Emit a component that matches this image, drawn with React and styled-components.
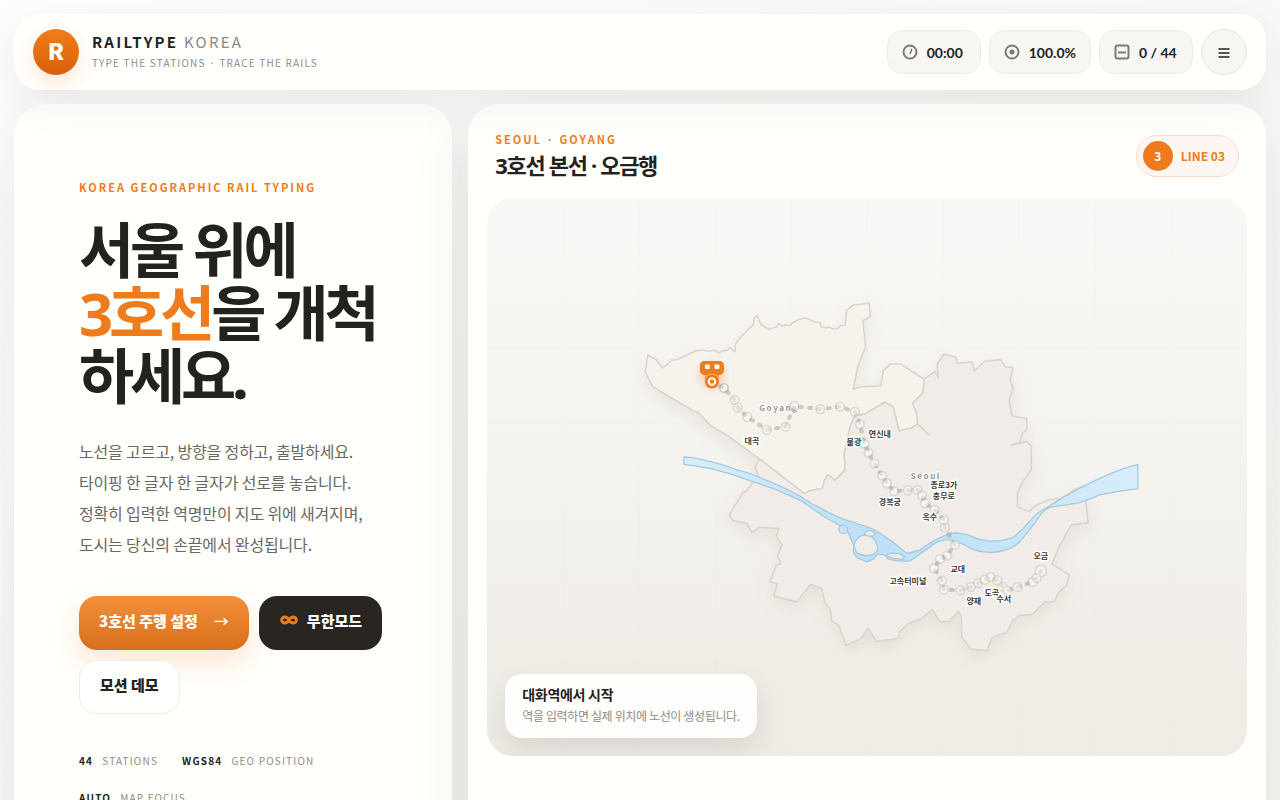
import React from "react"
import styled, { createGlobalStyle } from "styled-components"

const stats = [
  { id: "time", label: "Time", value: "00:00" },
  { id: "accuracy", label: "Accuracy", value: "100.0%" },
  { id: "progress", label: "Progress", value: "0 / 44" },
]

const facts = [
  { value: "44", label: "STATIONS" },
  { value: "WGS84", label: "GEO POSITION" },
  { value: "AUTO", label: "MAP FOCUS" },
]

const introLines = [
  "노선을 고르고, 방향을 정하고, 출발하세요.",
  "타이핑 한 글자 한 글자가 선로를 놓습니다.",
  "정확히 입력한 역명만이 지도 위에 새겨지며,",
  "도시는 당신의 손끝에서 완성됩니다.",
]

const stations = [
  [712, 381], [724, 388], [734.7, 400], [737.7, 407.7], [747.3, 417],
  [767, 430], [785.7, 426.7], [794.3, 406], [820.3, 409.3], [840, 406.7],
  [855, 412], [860, 424.3], [864.7, 444], [868.7, 453], [874.7, 463.7],
  [882, 475.7], [887, 483.3], [894.3, 491.3], [908, 490.3], [917.7, 490],
  [922.3, 495.7], [925.3, 503.3], [934.7, 510], [944, 520], [945, 527.7],
  [955, 544.7], [947.3, 555.7], [940, 559.3], [934.3, 568.3], [942, 580.7],
  [944, 589.7], [960.7, 590.3], [971, 587], [978.3, 583.3], [985, 579.7],
  [990.7, 577.3], [997.3, 580.3], [1002.7, 586.7], [1007.7, 590.7],
  [1017.7, 587], [1032.7, 582], [1036.7, 578.3], [1041, 571],
]

const stationLabels = [
  { name: "대곡", x: 752, y: 444 },
  { name: "연신내", x: 880, y: 437 },
  { name: "불광", x: 854, y: 445 },
  { name: "경복궁", x: 890, y: 505 },
  { name: "종로3가", x: 944, y: 488 },
  { name: "충무로", x: 944, y: 499 },
  { name: "옥수", x: 930, y: 520 },
  { name: "고속터미널", x: 908, y: 584 },
  { name: "교대", x: 958, y: 572 },
  { name: "양재", x: 974, y: 604 },
  { name: "도곡", x: 992, y: 596 },
  { name: "수서", x: 1004, y: 602 },
  { name: "오금", x: 1041, y: 559 },
]

const sharedBorder =
  "804.7,494 809,491 822.7,488.3 824,481.7 828,474.7 835,480.3 845.3,470 844.3,453 846,447 850,427 855,416 865,414 885,402.3 893.3,406.7 899,431 911,428.3 917.7,424 916.7,413.3 912.7,403.3 923.3,392.7 924,379.3"

const goyang =
  "648,355 645.3,371.7 652.7,386.7 692,410 699,412.5 710.7,426 726.7,435 759.5,459 " +
  sharedBorder +
  " 900.7,364 890.7,364 883.3,370.7 881,386 861,386.7 853.3,389.3 857.7,367.3 865.7,346.7 863,320.7 870.3,316.7 869.3,302.7 861.7,304.3 853.3,305 846.7,310.7 845.3,325.3 841,325.5 838.3,328.3 833.3,329.3 829,327 826,327.8 821.5,327 820,322.7 815,322 805,317.7 799,319.5 792.7,322.7 790,325.5 785,324.5 782,326.5 778.5,323.5 777,327 773,328 769,329.5 765,327 761,324.5 758.5,318.5 756.5,315.5 754,318.5 753.5,325 748,329.5 741,337 735.5,344 735,351.7 729.5,347.5 727.5,350.5 723,350.7 719,353 714,350 709,351.5 702,350 696,351 690,353.5 684,356.5 677,359.5 671,360.5 667,365 662.7,368 656,359.5"

const seoul =
  sharedBorder +
  " 935,371.7 938.3,378.3 937.3,364 944,354 955.7,356.7 957.3,363.3 972.3,362 974.3,371 985,361.3 1000.7,359.7 1005.3,366.7 1013.3,367.7 1010.3,379.3 1013.3,389.3 1009.3,400 1012,416 1026.7,418.3 1027.3,428.3 1021.7,435 1020.3,442.3 1011.3,445 1026.7,441.7 1031.7,446 1031.3,470 1021.7,483.3 1017.5,493.3 1017.7,506.7 1029.3,511.7 1036.7,505 1050,499.3 1065,499 1073.3,490 1083.3,486 1086,501.7 1088.3,522.7 1071.7,525 1060,545 1052,564.3 1069.3,574.7 1067.3,584.3 1058.3,593.3 1054.3,602 1045,602 1032,614.7 1020,615.3 1012.7,621.3 1007,632.7 992,637.7 987,651 971,649 962,637.7 961.3,616.7 958.7,611.7 949.3,621.3 940,622 932.7,609.7 920.7,619.3 908.7,623.3 899.3,632.3 899,638.3 876.7,641.7 868.3,628.3 860.7,639 846.3,645.3 839,625.7 831.7,621 830.7,610.7 824.7,602 822,589 810.7,584.3 796.7,602 773.7,596 777.3,584.3 770,581.7 776.7,565 781,564 777.7,555.7 782,545 776.3,535.7 779.3,528.7 759.3,527.3 752.3,533 746.7,523.3 733.3,521 729.3,515 742.7,493.3 746.7,491 753.3,481.7 758,474.3 755.3,466.7 759.5,459"

const riverPath =
  "M684 457Q696 458 703 460Q722 464 737 470Q756 475 763 479Q786 488 803 498Q811 504 822 509Q832 515 843 519Q858 524 870 528Q879 532 887 538Q897 545 907 553.5Q914 552 920 550Q934 540 945 535.7Q951 531.5 960 533.5Q968 534.5 975 537.7Q983 541 993 541.3Q1003 541 1013 537.7Q1023 530 1032 519Q1038 512 1047 507.7Q1064 496 1083 486.7Q1098 479 1113 472.7Q1125 468 1138 464.5V488.7Q1118 491 1100 495Q1091 499 1080 502.7Q1068 505 1053 506.7Q1047 508 1042 513Q1031 529 1023 538Q1018 545 1012 547.7Q1002 552 992 552.7Q982 553 972 549.3Q964 544 957 541.7Q951 539.5 945 540Q940 541 935 543.3Q928 549 923 551.7Q916 558 910 561Q898 562 888 559L885 555L877.3 554.3L874 559L867 562L857 557.7L853.3 551.7L854 546Q850 536 846.7 530Q838 524 827 518.3Q815 511 803 501.7Q790 496 777 490Q763 485 750 480.7Q732 474 713 469.3Q698 466 684 464.5Z"

const gridX = [563, 639, 715, 791, 867, 943, 1019, 1095, 1171]
const gridY = [273, 348, 423, 498, 573, 648, 723]

const GlobalStyle = createGlobalStyle`
  * {
    box-sizing: border-box;
  }
  html {
    overflow: hidden;
  }
  body {
    margin: 0;
    color: #24221e;
    background: linear-gradient(150deg, #fdfdfd 0%, #f7f7f6 60%, #f6f5f3 100%);
    font-family: "Noto Sans CJK KR", sans-serif;
  }
  button {
    font-family: inherit;
    cursor: pointer;
  }
`

const Page = styled.div`
  padding: 14px;
`

const Header = styled.header`
  position: relative;
  z-index: 2;
  display: flex;
  align-items: center;
  justify-content: space-between;
  height: 76px;
  padding: 0 19px;
  border-radius: 26px;
  background: #fffffc;
  box-shadow: 0 12px 40px rgba(40, 40, 50, 0.08);
`

const Brand = styled.div`
  display: flex;
  align-items: center;
  gap: 13px;
`

const Logo = styled.span`
  display: grid;
  place-items: center;
  width: 46px;
  height: 46px;
  padding-bottom: 4px;
  border-radius: 50%;
  color: #fff;
  font-size: 23px;
  font-weight: 900;
  line-height: 24px;
  background: linear-gradient(#f07d1c, #d7600a);
  box-shadow: 0 8px 20px rgba(239, 124, 28, 0.18);
`

const BrandName = styled.div`
  padding-top: 2px;
  font-size: 15px;
  font-weight: 700;
  line-height: 20px;
  letter-spacing: 0.15em;

  span {
    color: #8a8883;
    font-weight: 400;
  }
`

const BrandTagline = styled.div`
  color: #8f8b84;
  font-size: 10px;
  line-height: 22px;
  letter-spacing: 0.12em;
`

const Stats = styled.div`
  display: flex;
  align-items: center;
  gap: 8px;
`

const Stat = styled.div`
  display: flex;
  align-items: center;
  gap: 9px;
  min-width: 94px;
  height: 44px;
  padding: 0 14px;
  border: 1px solid #eeebe7;
  border-radius: 16px;
  background: #f8f6f3;
  font-family: Lato, "Noto Sans CJK KR", sans-serif;
  font-size: 14px;
  font-weight: 700;
  white-space: nowrap;

  svg {
    width: 16px;
    height: 16px;
    color: #7d7b77;
  }
`

const MenuButton = styled.button`
  display: grid;
  place-items: center;
  width: 46px;
  height: 46px;
  padding: 0;
  border: 1px solid #e6e5e1;
  border-radius: 50%;
  background: #f7f6f3;
  color: #24221e;
`

const Main = styled.main`
  display: grid;
  grid-template-columns: minmax(0, 39fr) minmax(0, 71fr);
  gap: 16px;
  margin-top: 14px;
`

const Panel = styled.section`
  min-width: 0;
  border-radius: 32px;
  background: #fffffc;
  box-shadow: 0 20px 60px rgba(50, 45, 40, 0.1);
`

const Intro = styled(Panel)`
  padding: 71px 65px;
`

const MapPanel = styled(Panel)`
  padding: 23px 19px;
`

const Eyebrow = styled.p`
  margin: 0;
  color: #ef7c1c;
  font-size: 11px;
  font-weight: 700;
  line-height: 24px;
  letter-spacing: 2px;
`

const Title = styled.h1`
  margin: 20px 0 0;
  font-family: "Noto Sans", "Noto Sans CJK KR", sans-serif;
  font-size: 60px;
  font-weight: 700;
  line-height: 63px;
  letter-spacing: -0.07em;
  word-break: break-all;

  em {
    color: #ef7c1c;
    font-style: normal;
  }
`

const Lead = styled.p`
  margin: 28px 0 0;
  color: #6a6761;
  font-size: 16px;
  line-height: 31px;
  letter-spacing: -0.01em;
  white-space: nowrap;
`

const Actions = styled.div`
  display: flex;
  flex-wrap: wrap;
  gap: 10px;
  margin-top: 36px;
`

const ActionButton = styled.button`
  display: inline-flex;
  align-items: center;
  gap: ${props => (props.$tone === "primary" ? "16px" : "8px")};
  height: 54px;
  padding: 0 20px 6px;
  border: ${props => (props.$tone === "plain" ? "1px solid #ececea" : "0")};
  border-radius: 18px;
  color: ${props => (props.$tone === "plain" ? "#24221e" : "#fff")};
  background: ${props =>
    props.$tone === "primary"
      ? "linear-gradient(#f48f3b, #d66f1a)"
      : props.$tone === "dark"
      ? "#292621"
      : "#fffffd"};
  box-shadow: ${props =>
    props.$tone === "primary" ? "0 12px 28px rgba(239, 124, 28, 0.2)" : "none"};
  font-size: 15px;
  font-weight: 900;

  span {
    font-weight: 500;
  }
  svg {
    color: #ef7c1c;
  }
`

const Facts = styled.ul`
  display: flex;
  flex-wrap: wrap;
  gap: 13px 24px;
  margin: 35px 0 0;
  padding: 0;
  list-style: none;
  color: #8f8b84;
  font-size: 10px;
  line-height: 24px;
  letter-spacing: 0.12em;

  b {
    margin-right: 9px;
    color: #24221e;
  }
`

const MapHeader = styled.div`
  display: flex;
  align-items: flex-end;
  justify-content: space-between;
  padding: 0 8px;

  h2 {
    margin: 0;
    padding-top: 2px;
    font-family: "Noto Sans", "Noto Sans CJK KR", sans-serif;
    font-size: 22px;
    line-height: 24px;
    letter-spacing: -0.06em;
  }
`

const LineBadge = styled.div`
  display: flex;
  align-items: center;
  gap: 8px;
  height: 42px;
  padding: 0 13px 0 6px;
  border: 1px solid #fbdcc8;
  border-radius: 21px;
  background: #fdf7f4;
  color: #ef7c1c;
  font-size: 12px;
  font-weight: 700;
  line-height: 16px;

  span {
    display: grid;
    place-items: center;
    width: 30px;
    height: 30px;
    border-radius: 50%;
    color: #fff;
    background: #ef7c1c;
  }
`

const MapCanvas = styled.div`
  position: relative;
  margin-top: 21px;
  border-radius: 26px;
  overflow: hidden;
  background: linear-gradient(#f9f8f6, #f3f1ec 60%, #efebe5);

  > svg {
    display: block;
    width: 100%;
    height: auto;
  }
`

const MapNote = styled.div`
  position: absolute;
  left: 18px;
  bottom: 18px;
  padding: 10px 17px 12px;
  border-radius: 17px;
  background: #fefefd;
  box-shadow: 0 12px 30px rgba(60, 50, 40, 0.12);
  line-height: 21px;

  strong {
    display: block;
    font-size: 14px;
    letter-spacing: -0.02em;
  }
  span {
    display: block;
    color: #918c85;
    font-size: 12px;
    letter-spacing: -0.03em;
  }
`

const StationName = styled.text`
  fill: #3b3733;
  stroke: #fff;
  stroke-width: 3px;
  stroke-linejoin: round;
  paint-order: stroke;
  font-size: 8px;
  font-weight: 700;
  text-anchor: middle;
`

const CityName = styled.text`
  fill: #99958f;
  stroke: #fff;
  stroke-width: 2px;
  paint-order: stroke;
  font-size: 8px;
  font-weight: 700;
  letter-spacing: 0.2em;
  text-anchor: middle;
`

const StatIcon = ({ id }) => (
  <svg viewBox="0 0 16 16" fill="none" stroke="currentColor" strokeWidth="2" aria-hidden="true">
    {id === "progress" ? (
      <>
        <rect x="1.5" y="1.5" width="13" height="13" rx="2" />
        <path d="M4 8.5h8" />
      </>
    ) : (
      <circle cx="8" cy="8" r="6.5" />
    )}
    {id === "time" && <path d="M8.3 9.2 9.6 5.4" strokeLinecap="round" strokeWidth="1.6" />}
    {id === "accuracy" && <circle cx="8" cy="8" r="2.5" fill="currentColor" stroke="none" />}
  </svg>
)

const Train = () => (
  <g>
    <circle cx="712" cy="376" r="19" fill="url(#trainGlow)" />
    <path d="M705 374h14v5h-14z" fill="#ef7c1c" opacity=".7" />
    <rect x="700" y="361" width="24" height="14" rx="4.5" fill="#ef7c1c" />
    <rect x="705" y="364.5" width="5" height="4.5" rx="1.5" fill="#fff" />
    <rect x="714.5" y="364.5" width="5" height="4.5" rx="1.5" fill="#fff" />
    <circle cx="712" cy="381.5" r="8" fill="#f7c9a3" opacity=".5" />
    <circle cx="712" cy="381.5" r="7" fill="#ef7c1c" />
    <circle cx="712" cy="381.5" r="3.3" fill="#ef7c1c" stroke="#fff" strokeWidth="2" />
  </g>
)

const RouteMap = () => (
  <svg viewBox="487 198 760 558" role="img" aria-label="3호선 노선도">
    <defs>
      <radialGradient id="trainGlow">
        <stop offset=".4" stopColor="#f5a468" stopOpacity=".35" />
        <stop offset="1" stopColor="#f5a468" stopOpacity="0" />
      </radialGradient>
      <linearGradient id="water" gradientUnits="userSpaceOnUse" x1="684" y1="0" x2="1138" y2="0">
        <stop offset="0" stopColor="#d8eefb" />
        <stop offset=".4" stopColor="#bee0f6" />
        <stop offset=".65" stopColor="#c3e3f7" />
        <stop offset="1" stopColor="#d8edfa" />
      </linearGradient>
      <filter id="landShadow" x="-20%" y="-20%" width="140%" height="150%">
        <feDropShadow dx="0" dy="7" stdDeviation="8" floodColor="#8c7f6c" floodOpacity=".13" />
      </filter>
    </defs>
    <g stroke="#e9e6df" strokeWidth="1" opacity=".12">
      {gridX.map(x => (
        <path key={x} d={`M${x} 198v558`} />
      ))}
      {gridY.map(y => (
        <path key={y} d={`M487 ${y}h760`} />
      ))}
    </g>
    <g stroke="#dad5cc" strokeWidth="1.6" strokeLinejoin="round" filter="url(#landShadow)">
      <polygon points={goyang} fill="#f6f3ed" />
      <polygon points={seoul} fill="#f1ece7" />
      <path d="M917.7 424 929.5 435.5" fill="none" />
    </g>
    <g stroke="#a4cae1" strokeWidth="1.3" strokeLinejoin="round">
      <path d={riverPath} fill="url(#water)" />
      <circle cx="843.3" cy="529.3" r="4.4" fill="#c9e2f1" />
      <path d="M861 536Q867 534 872 537Q877 541 878 550L874 554Q866 558 857 553L854 546Q855 539 861 536Z" fill="#f1ece7" />
      <path d="M864 534l3-3 4-.5 4 3-2 3-5-.5Z" fill="#f1ece7" />
      <path d="M886 556l4-2.7 9 .2 6 3.5-3 2.5-8-1Z" fill="#f1ece7" />
    </g>
    <CityName x="779" y="411">Goyang</CityName>
    <CityName x="926" y="479">Seoul</CityName>
    {stations.slice(1).map(([x, y], index) => (
      <circle
        key={`${x}-${y}`}
        cx={x}
        cy={y}
        r={index === stations.length - 2 ? 5.5 : 4.3}
        fill="#fff"
        fillOpacity=".5"
        stroke={index === 0 ? "#a9a49d" : "#c6c1ba"}
        strokeOpacity=".5"
        strokeWidth="1.8"
      />
    ))}
    <polyline
      points={stations.map(point => point.join(",")).join(" ")}
      fill="none"
      stroke="#a39e97"
      strokeOpacity=".5"
      strokeWidth="4"
      strokeLinecap="round"
      strokeDasharray="2 7.4"
    />
    {stations.slice(1).map(([x, y]) => (
      <circle key={`${x}-${y}`} cx={x} cy={y} r="3" fill="#f6f4f1" fillOpacity=".5" />
    ))}
    {stationLabels.map(label => (
      <StationName key={label.name} x={label.x} y={label.y}>
        {label.name}
      </StationName>
    ))}
    <Train />
  </svg>
)

const App = () => (
  <>
    <GlobalStyle />
    <Page>
      <Header>
        <Brand>
          <Logo>R</Logo>
          <div>
            <BrandName>
              RAILTYPE <span>KOREA</span>
            </BrandName>
            <BrandTagline>TYPE THE STATIONS · TRACE THE RAILS</BrandTagline>
          </div>
        </Brand>
        <Stats>
          {stats.map(stat => (
            <Stat key={stat.id} title={stat.label}>
              <StatIcon id={stat.id} />
              {stat.value}
            </Stat>
          ))}
          <MenuButton aria-label="Menu">
            <svg width="12" height="12" viewBox="0 0 12 12" stroke="currentColor" strokeWidth="1.5" aria-hidden="true">
              <path d="M.5 3h11M.5 7h11M.5 11h11" />
            </svg>
          </MenuButton>
        </Stats>
      </Header>
      <Main>
        <Intro>
          <Eyebrow>KOREA GEOGRAPHIC RAIL TYPING</Eyebrow>
          <Title>
            서울 위에
            <br />
            <em>3호선</em>을 개척하세요.
          </Title>
          <Lead>
            {introLines.map(line => (
              <React.Fragment key={line}>
                {line}
                <br />
              </React.Fragment>
            ))}
          </Lead>
          <Actions>
            <ActionButton $tone="primary">
              3호선 주행 설정 <span>→</span>
            </ActionButton>
            <ActionButton $tone="dark">
              <svg width="20" height="10" viewBox="0 0 20 10" fill="none" stroke="currentColor" strokeWidth="3" aria-hidden="true">
                <path d="M10 5C8.5 2.5 7.5 2 5.7 2a3 3 0 0 0 0 6C7.5 8 8.5 7.5 10 5s2.5-3 4.3-3a3 3 0 0 1 0 6C12.5 8 11.5 7.5 10 5Z" />
              </svg>
              무한모드
            </ActionButton>
            <ActionButton $tone="plain">모션 데모</ActionButton>
          </Actions>
          <Facts>
            {facts.map(fact => (
              <li key={fact.label}>
                <b>{fact.value}</b>
                {fact.label}
              </li>
            ))}
          </Facts>
        </Intro>
        <MapPanel>
          <MapHeader>
            <div>
              <Eyebrow>SEOUL · GOYANG</Eyebrow>
              <h2>3호선 본선 · 오금행</h2>
            </div>
            <LineBadge>
              <span>3</span>
              LINE 03
            </LineBadge>
          </MapHeader>
          <MapCanvas>
            <RouteMap />
            <MapNote>
              <strong>대화역에서 시작</strong>
              <span>역을 입력하면 실제 위치에 노선이 생성됩니다.</span>
            </MapNote>
          </MapCanvas>
        </MapPanel>
      </Main>
    </Page>
  </>
)

export default App
